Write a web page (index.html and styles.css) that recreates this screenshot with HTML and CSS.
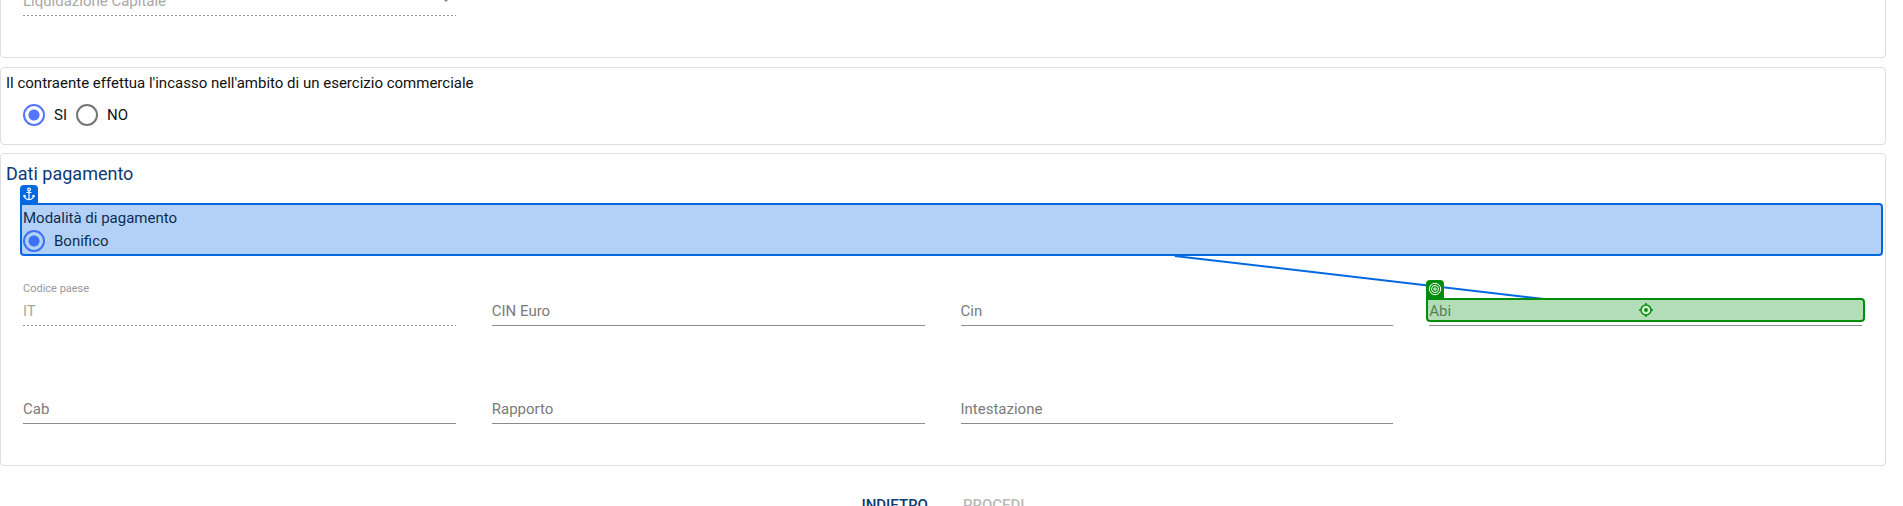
FILE: index.html
```html
<!DOCTYPE html>
<html lang="it">
<head>
<meta charset="utf-8">
<title>Dati pagamento</title>
<link rel="stylesheet" href="styles.css">
</head>
<body>
<main class="page">
  <section class="card card-product">
    <div class="grid">
      <div class="field select-field">
        <select class="control disabled" aria-label="Prodotto" disabled><option>Liquidazione Capitale</option></select>
        <svg class="arrow" viewBox="0 0 10 5" aria-hidden="true"><path d="M0 0h10L5 5z"/></svg>
      </div>
    </div>
  </section>

  <fieldset class="card card-question">
    <legend class="question">Il contraente effettua l'incasso nell'ambito di un esercizio commerciale</legend>
    <div class="radios">
      <label class="radio"><input type="radio" name="incasso" checked>SI</label>
      <label class="radio"><input type="radio" name="incasso">NO</label>
    </div>
  </fieldset>

  <section class="card card-payment">
    <h2 class="title">Dati pagamento</h2>
    <div class="method" role="radiogroup" aria-labelledby="method-label">
      <div id="method-label" class="method-label">Modalità di pagamento</div>
      <label class="radio"><input type="radio" name="modalita" checked>Bonifico</label>
      <div class="mark mark-anchor">
        <span class="badge"><svg width="12" height="14" viewBox="0 0 12 14" fill="none" stroke="#fff" stroke-width="1.2" aria-hidden="true"><circle cx="6" cy="2.5" r="1.4"/><path d="M6 4v8.5M3.5 5.5h5M1.2 8.5C1.5 11 3.5 12.4 6 12.6c2.5-.2 4.5-1.6 4.8-4.1M.5 10l.7-1.7 1.7.9M11.5 10l-.7-1.7-1.7.9"/></svg></span>
      </div>
    </div>
    <div class="grid grid-bank">
      <div class="field">
        <label class="float" for="paese">Codice paese</label>
        <input class="control disabled" id="paese" value="IT" disabled>
      </div>
      <div class="field"><input class="control" aria-label="CIN Euro" placeholder="CIN Euro"></div>
      <div class="field"><input class="control" aria-label="Cin" placeholder="Cin"></div>
      <div class="field target">
        <input class="control" aria-label="Abi" placeholder="Abi">
        <div class="mark mark-target">
          <span class="badge"><svg width="14" height="14" viewBox="0 0 14 14" fill="none" stroke="#fff" aria-hidden="true"><circle cx="7" cy="7" r="5.7"/><circle cx="7" cy="7" r="3.5"/><circle cx="7" cy="7" r="1.2"/></svg></span>
          <svg width="14" height="14" viewBox="0 0 14 14" aria-hidden="true"><circle cx="7" cy="7" r="5" fill="#d5ecd5" stroke="#048d0c" stroke-width="1.5"/><circle cx="7" cy="7" r="1.9" fill="#048d0c"/><path d="M7 0v2M7 12v2M0 7h2M12 7h2" stroke="#048d0c" stroke-width="1.5"/></svg>
        </div>
      </div>
      <div class="field"><input class="control" aria-label="Cab" placeholder="Cab"></div>
      <div class="field"><input class="control" aria-label="Rapporto" placeholder="Rapporto"></div>
      <div class="field"><input class="control" aria-label="Intestazione" placeholder="Intestazione"></div>
    </div>
    <svg class="link-line" aria-hidden="true"><line x1="62.3%" y1="1" x2="81.9%" y2="44" stroke="#0268e0" stroke-width="2"/></svg>
  </section>

  <div class="actions">
    <button class="action" type="button">INDIETRO</button>
    <button class="action" type="button" disabled>PROCEDI</button>
  </div>
</main>
</body>
</html>
```
FILE: styles.css
```css
* { box-sizing: border-box; }
html { overflow: hidden; }
body {
  margin: 0;
  background: #fff;
  color: #111;
  font-family: Roboto, sans-serif;
  font-size: 15px;
  line-height: 20px;
}
.page { padding-right: 17px; }
.card {
  position: relative;
  margin: 0 0 9px;
  padding: 0;
  border: 1px solid #dedede;
  border-radius: 4px;
}
.card-product { margin-top: -12px; padding-bottom: 41px; }
.grid {
  display: grid;
  grid-template-columns: repeat(4, 1fr);
  column-gap: 36px;
  padding: 0 23px 0 22px;
}
.field { position: relative; display: flex; }
.control {
  flex: 1;
  min-width: 0;
  height: 28px;
  padding: 0 0 2px;
  border: 0;
  border-bottom: 1px solid #8c8c8c;
  border-radius: 0;
  background: transparent;
  color: #111;
  font: inherit;
  line-height: 20px;
  appearance: none;
}
.control::placeholder { color: #7b7b7b; opacity: 1; }
.control.disabled {
  border-bottom: 0;
  background: repeating-linear-gradient(to right, #999 0 2px, transparent 2px 4px) left bottom / 100% 1px no-repeat;
  color: #a8a8a8;
  opacity: 1;
}
.select-field .control { height: 27px; padding-bottom: 4px; }
.arrow { position: absolute; right: 5px; top: 8px; width: 10px; height: 5px; fill: #888; }

.card-question { margin-bottom: 8px; padding-bottom: 18px; }
.question { float: left; width: 100%; padding: 5px 5px 0; }
.radios { clear: both; display: flex; gap: 9px; padding: 11px 22px 0; }
.radio { display: flex; align-items: center; gap: 9px; }
.radio input {
  appearance: none;
  width: 22px;
  height: 22px;
  margin: 0;
  border: 2px solid #757575;
  border-radius: 50%;
}
.radio input:checked {
  border-color: #5476ff;
  background: radial-gradient(circle, #5476ff 0 5px, transparent 6px);
}

.card-payment { padding-bottom: 41px; margin-bottom: 27px; }
.title {
  margin: 0;
  padding: 8px 5px 0;
  color: #0d3974;
  font-size: 18px;
  font-weight: 400;
  line-height: 24px;
}
.method { position: relative; margin: 18px 2px 0 19px; padding: 2px 3px 1px; }
.method-label { padding-top: 2px; height: 24px; }
.mark { position: absolute; inset: 0; border: 2px solid; border-radius: 4px; }
.mark-anchor { inset: -1px 0 -3px; border-color: #0268e0; background: rgb(2 104 224 / 30%); border-top-left-radius: 0; }
.mark-target {
  inset: 0 -3px 4px;
  display: flex;
  align-items: center;
  justify-content: center;
  border-color: #048d0c;
  border-top-left-radius: 0;
  background: rgb(4 141 12 / 30%);
}
.badge {
  position: absolute;
  left: -2px;
  top: -20px;
  display: flex;
  align-items: center;
  justify-content: center;
  width: 18px;
  height: 18px;
  border-radius: 4px 4px 0 0;
}
.mark-anchor .badge { background: #0268e0; }
.mark-target .badge { background: #048d0c; }
.grid-bank { margin-top: 45px; row-gap: 70px; }
.float {
  position: absolute;
  left: 0;
  top: -17px;
  color: #999;
  font-size: 11px;
  line-height: 16px;
}
.target { z-index: 1; }
.link-line { position: absolute; left: 0; top: 101px; width: 100%; height: 45px; }

.actions { display: flex; justify-content: center; gap: 35px; }
.action {
  padding: 0;
  border: 0;
  background: none;
  color: #0d3974;
  font: 500 15px/24px Roboto, sans-serif;
}
.action:disabled { color: #b9b9b9; }
```
